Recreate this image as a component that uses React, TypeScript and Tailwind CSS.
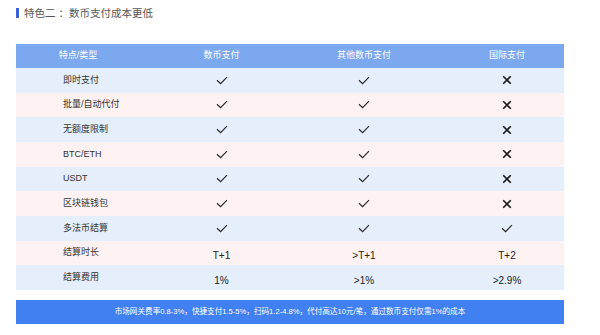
import type { ReactNode } from 'react'

type Cell = 'yes' | 'no' | string

const rows: { label: string; cells: Cell[] }[] = [
  { label: '即时支付', cells: ['yes', 'yes', 'no'] },
  { label: '批量/自动代付', cells: ['yes', 'yes', 'no'] },
  { label: '无额度限制', cells: ['yes', 'yes', 'no'] },
  { label: 'BTC/ETH', cells: ['yes', 'yes', 'no'] },
  { label: 'USDT', cells: ['yes', 'yes', 'no'] },
  { label: '区块链钱包', cells: ['yes', 'yes', 'no'] },
  { label: '多法币结算', cells: ['yes', 'yes', 'yes'] },
  { label: '结算时长', cells: ['T+1', '>T+1', 'T+2'] },
  { label: '结算费用', cells: ['1%', '>1%', '>2.9%'] },
]

const cols = 'grid grid-cols-[134px_143px_142px_1fr]'

function Check() {
  return (
    <svg width="12" height="9" viewBox="0 0 12 9" fill="none">
      <path d="M1 4.2 L4.6 7.6 L11 1.2" stroke="#2a2a2a" strokeWidth="1.2" />
    </svg>
  )
}

function Cross() {
  return (
    <svg width="10" height="10" viewBox="0 0 10 10" fill="none">
      <path d="M1.2 1.2 L8.8 8.8 M8.8 1.2 L1.2 8.8" stroke="#1a1a1a" strokeWidth="1.6" />
    </svg>
  )
}

function renderCell(cell: Cell): ReactNode {
  if (cell === 'yes') return <Check />
  if (cell === 'no') return <Cross />
  return <span className="mt-[6px] text-[10px] text-[#222]">{cell}</span>
}

export default function App() {
  return (
    <div className="h-[335px] w-[600px] bg-white font-['Liberation_Sans','Noto_Sans_CJK_SC',sans-serif]">
      <div className="flex items-center gap-[5px] pl-4 pt-[5px]">
        <span className="h-[10px] w-[3px] bg-[#3b62d6]" />
        <span className="text-[10.5px] leading-[16px] text-[#555]">特色二 ：数币支付成本更低</span>
      </div>

      <div className="ml-4 mt-[23px] w-[548px]">
        <div className={`${cols} h-[24px] items-center bg-[#7ba8ee] text-[9px] text-white`}>
          <div className="pr-[10px] text-center">特点/类型</div>
          <div className="text-center">数币支付</div>
          <div className="text-center">其他数币支付</div>
          <div className="pl-[15px] text-center">国际支付</div>
        </div>
        <div className="grid h-[222px] grid-rows-9">
          {rows.map((row, i) => (
            <div
              key={row.label}
              className={`${cols} items-center ${i % 2 === 0 ? 'bg-[#e5eefb]' : 'bg-[#fdf1f1]'}`}
            >
              <div className="pl-[47px] text-[9px] text-[#333]">{row.label}</div>
              {row.cells.map((cell, j) => (
                <div key={j} className={`flex justify-center ${j === 2 ? 'pl-[15px]' : ''}`}>
                  {renderCell(cell)}
                </div>
              ))}
            </div>
          ))}
        </div>

        <div className="mt-[10px] flex h-[24px] items-center justify-center bg-[#4080f0] text-[7.6px] text-white">
          市场网关费率0.8-3%，快捷支付1.5-5%，扫码1.2-4.8%，代付高达10元/笔，通过数币支付仅需1%的成本
        </div>
      </div>
    </div>
  )
}
